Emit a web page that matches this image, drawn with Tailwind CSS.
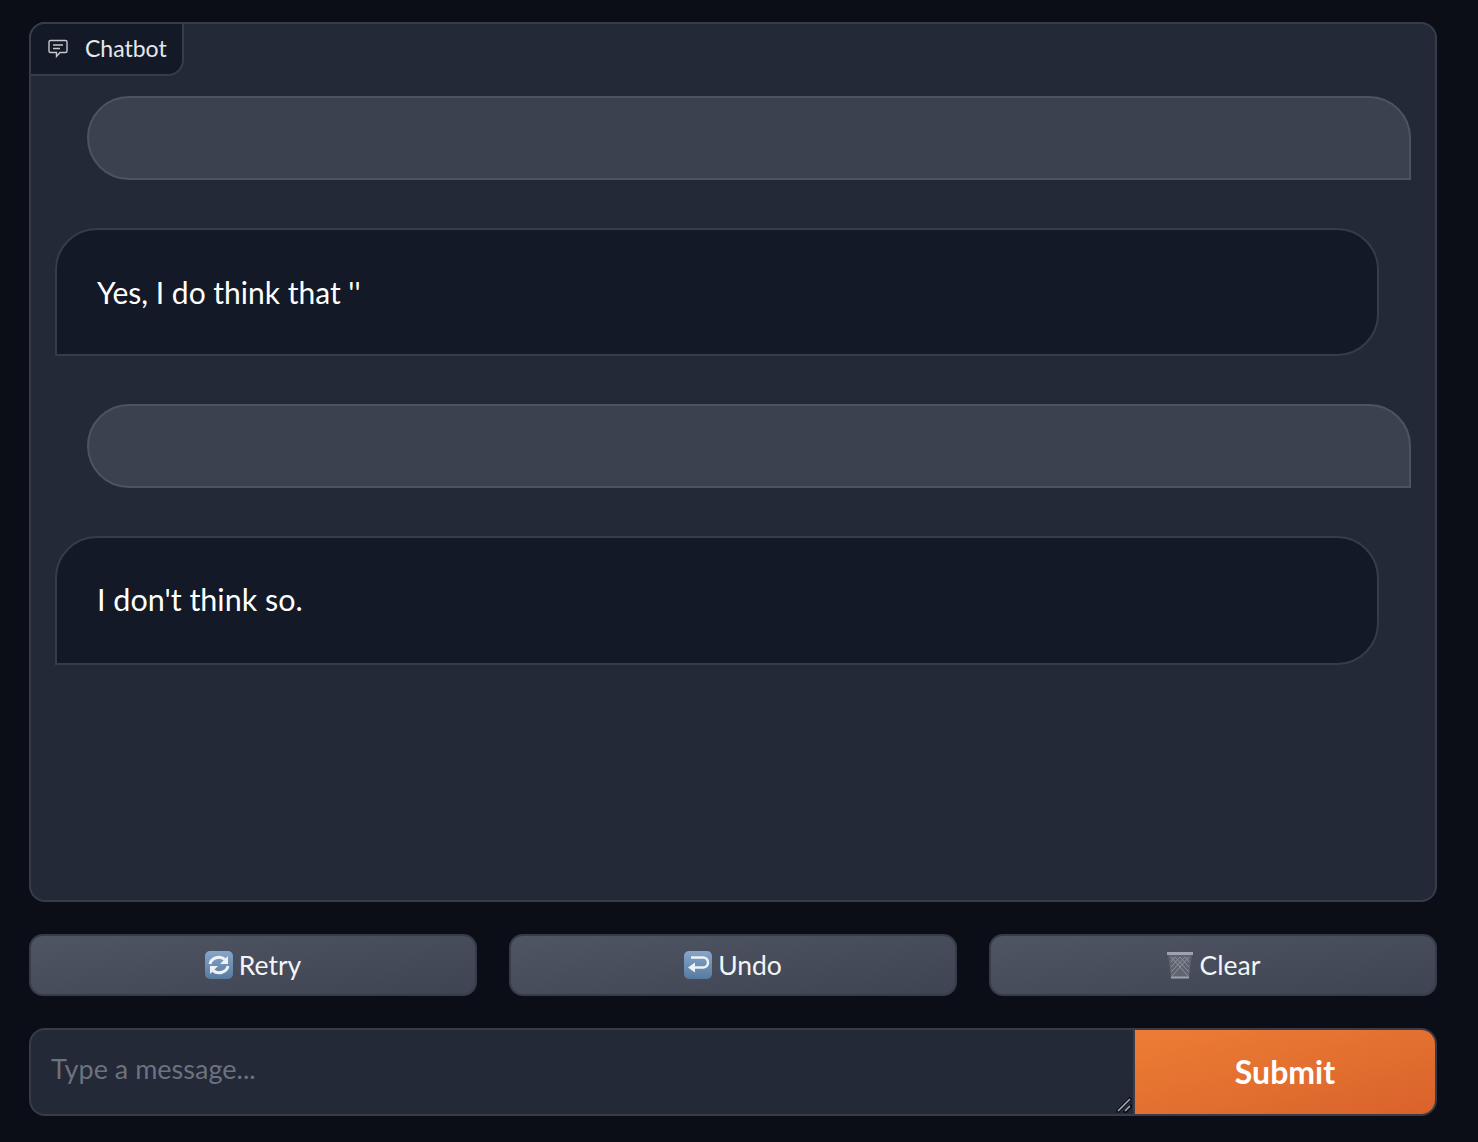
<!DOCTYPE html>
<html lang="en">
<head>
  <meta charset="UTF-8" />
  <title>Chatbot</title>
  <script src="https://cdn.jsdelivr.net/npm/@tailwindcss/browser@4"></script>
</head>
<body class="bg-[#0b0e17] font-['Lato',sans-serif] text-white">
  <div class="h-[1142px] pl-[29px] pr-[41px] pt-[22px] flex flex-col gap-[32px]">

    <!-- chat panel -->
    <div class="relative h-[880px] rounded-[16px] border-2 border-[#373c4b] bg-[#232937] pt-[72px] px-[24px] flex flex-col gap-[48px]">
      <div class="absolute -left-[2px] -top-[2px] h-[54px] w-[155px] rounded-tl-[16px] rounded-br-[16px] border-2 border-[#373c4b] bg-[#131926] flex items-center gap-[16px] pl-[16px] pb-[1px] text-[23px] text-[#e5e7eb]">
        <svg class="w-[22px] h-[22px]" viewBox="0 0 22 22" fill="none" stroke="#c4c8cf" stroke-width="1.400">
          <path d="M3.500 2.500h15a1.500 1.500 0 0 1 1.500 1.500v9a1.500 1.500 0 0 1-1.500 1.500h-5.500l-3.500 4v-4h-6a1.500 1.500 0 0 1-1.500-1.500v-9a1.500 1.500 0 0 1 1.500-1.500z"/>
          <path d="M6 7h10M6 10.500h7"/>
        </svg>
        <span>Chatbot</span>
      </div>

      <div class="ml-[32px] h-[84px] rounded-t-[42px] rounded-bl-[42px] border-2 border-[#4d5362] bg-[#3c4150]"></div>
      <div class="mr-[32px] h-[128px] rounded-t-[42px] rounded-br-[42px] border-2 border-[#373c4b] bg-[#131926] flex items-center pl-[40px] text-[30px]">Yes, I do think that ''</div>
      <div class="ml-[32px] h-[84px] rounded-t-[42px] rounded-bl-[42px] border-2 border-[#4d5362] bg-[#3c4150]"></div>
      <div class="mr-[32px] h-[129px] rounded-t-[42px] rounded-br-[42px] border-2 border-[#373c4b] bg-[#131926] flex items-center pl-[40px] pb-[2px] text-[30.500px]">I don't think so.</div>
    </div>

    <!-- buttons -->
    <div class="grid grid-cols-3 gap-[32px]">
      <button class="h-[62px] rounded-[14px] border-2 border-[#373c4b] bg-gradient-to-br from-[#4f5563] to-[#3f4453] flex items-center justify-center gap-[6px] text-[26.500px] text-[#f3f4f6]">
        <svg class="w-[28px] h-[28px]" viewBox="0 0 28 28">
          <defs><linearGradient id="blue" x1="0" y1="0" x2="0" y2="1"><stop offset="0" stop-color="#86a6ca"/><stop offset="1" stop-color="#577a9f"/></linearGradient></defs>
          <rect width="28" height="28" rx="5" fill="url(#blue)"/>
          <path d="M5 13a9 8 0 0 1 15-4.500" fill="none" stroke="#eef2f7" stroke-width="3"/>
          <path d="M23 15a9 8 0 0 1-15 4.500" fill="none" stroke="#eef2f7" stroke-width="3"/>
          <path d="M23 5v8h-8zM5 23v-8h8z" fill="#eef2f7"/>
        </svg>
        <span class="pt-[1px]">Retry</span>
      </button>
      <button class="h-[62px] rounded-[14px] border-2 border-[#373c4b] bg-gradient-to-br from-[#4f5563] to-[#3f4453] flex items-center justify-center gap-[6px] text-[26.500px] text-[#f3f4f6]">
        <svg class="w-[28px] h-[28px]" viewBox="0 0 28 28">
          <rect width="28" height="28" rx="5" fill="url(#blue)"/>
          <path d="M7 6.500h12a4.500 4.500 0 0 1 0 10h-9" fill="none" stroke="#eef2f7" stroke-width="2.500"/>
          <path d="M11 11.500v10l-7-5z" fill="#eef2f7"/>
        </svg>
        <span class="pt-[1px]">Undo</span>
      </button>
      <button class="h-[62px] rounded-[14px] border-2 border-[#373c4b] bg-gradient-to-br from-[#4f5563] to-[#3f4453] flex items-center justify-center gap-[6px] text-[26.500px] text-[#f3f4f6]">
        <svg class="w-[28px] h-[28px]" viewBox="0 0 28 28">
          <path d="M2 2h24l-3 25h-18z" fill="#5f6470"/>
          <path d="M5 6l17 19M9 6l14 15M14 6l9 10M19 6l4 5M23 6l-17 19M19 6l-14 15M14 6l-9 10M9 6l-4 5" stroke="#8f95a0" stroke-width=".9" fill="none"/>
          <path d="M1 2.500h26" stroke="#9ca3af" stroke-width="3"/>
          <path d="M5 26.500h18" stroke="#9ca3af" stroke-width="2"/>
        </svg>
        <span class="pt-[1px]">Clear</span>
      </button>
    </div>

    <!-- input row -->
    <div class="flex h-[88px] rounded-[16px] border-2 border-[#373c4b] bg-[#232937] overflow-hidden">
      <div class="relative flex-1">
        <textarea placeholder="Type a message..." class="block w-full h-full resize-none bg-transparent pl-[20px] pt-[21px] text-[27px] leading-[36px] outline-none placeholder:text-[#6b7280]"></textarea>
        <svg class="absolute right-[1px] bottom-[1px] w-[16px] h-[16px]" viewBox="0 0 16 16" fill="none">
          <path d="M1 15L15 1M8 16L16 8" stroke="#0b0e17" stroke-width="3.500"/>
          <path d="M2 14L14 2M9 14L14 9" stroke="#a3a7ae" stroke-width="1.600"/>
        </svg>
      </div>
      <button class="w-[302px] border-l-2 border-[#373c4b] bg-gradient-to-br from-[#ed7d35] to-[#d9622b] text-[32px] font-bold text-white">Submit</button>
    </div>
  </div>
</body>
</html>
